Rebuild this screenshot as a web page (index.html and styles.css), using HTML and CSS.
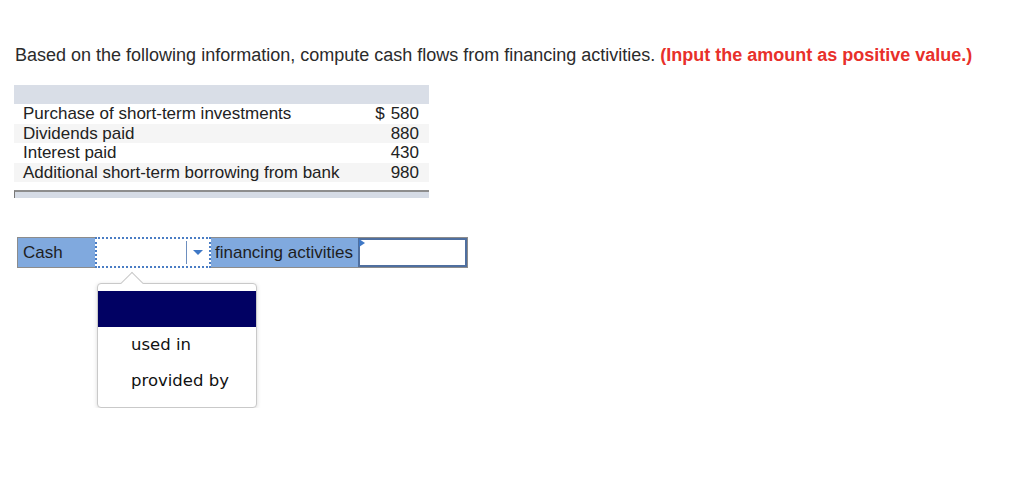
FILE: index.html
```html
<!DOCTYPE html>
<html>
<head>
<meta charset="utf-8">
<link rel="stylesheet" href="styles.css">
</head>
<body>
<div class="page">
  <p class="question">Based on the following information, compute cash flows from financing activities. <span class="note">(Input the amount as positive value.)</span></p>

  <div class="data">
    <div class="data-head"></div>
    <div class="data-row"><span>Purchase of short-term investments</span><span class="amt"><span class="cur">$</span>580</span></div>
    <div class="data-row alt"><span>Dividends paid</span><span class="amt">880</span></div>
    <div class="data-row"><span>Interest paid</span><span class="amt">430</span></div>
    <div class="data-row alt"><span>Additional short-term borrowing from bank</span><span class="amt">980</span></div>
  </div>
  <div class="data-foot"></div>

  <div class="answer-wrap">
    <div class="answer">
      <div class="cell label">Cash</div>
      <div class="cell select">
        <div class="select-box"></div>
        <div class="select-btn"><span class="caret"></span></div>
      </div>
      <div class="cell label wide">financing activities</div>
      <div class="cell input"><span class="flag"></span></div>
    </div>

    <div class="choices">
      <div class="notch"></div>
      <div class="opt selected"></div>
      <div class="opt">used in</div>
      <div class="opt">provided by</div>
    </div>
  </div>
</div>
</body>
</html>
```

FILE: styles.css
```css
html, body {
  margin: 0;
  padding: 0;
  background: #ffffff;
}

.page {
  padding: 0 0 0 14px;
  font-family: "Liberation Sans", Arial, sans-serif;
  color: #222;
}

.question {
  margin: 0;
  padding-top: 45px;
  padding-left: 1px;
  font-size: 18px;
  line-height: 21px;
  color: #2b2b2b;
}

.note {
  color: #e8302a;
  font-weight: bold;
}

.data {
  margin-top: 19px;
  width: 415px;
  font-size: 17px;
}

.data-head {
  height: 19px;
  background: #d9dee7;
}

.data-row {
  height: 19.5px;
  line-height: 19.5px;
  display: flex;
  justify-content: space-between;
  padding: 0 10px 0 9px;
  background: #ffffff;
  color: #222;
}

.data-row.alt {
  background: #f5f5f5;
}

.amt {
  text-align: right;
}

.cur {
  margin-right: 6px;
}

.data-foot {
  margin-top: 8px;
  width: 414px;
  height: 6px;
  background: #d5dbe5;
  border-top: 2px solid #8d8d8d;
  border-left: 1px solid #777;
}

.answer-wrap {
  margin-top: 39px;
  margin-left: 3px;
}

.answer {
  display: flex;
  width: 451px;
  height: 31px;
  box-sizing: border-box;
  border: 1px solid #8c8c8c;
  background: #80a9de;
  font-size: 17px;
}

.cell {
  height: 29px;
  box-sizing: border-box;
}

.cell.label {
  width: 77px;
  padding-left: 5px;
  line-height: 29px;
  color: #1e1e1e;
}

.cell.label.wide {
  width: 146px;
  padding-left: 4px;
}

.cell.select {
  width: 116px;
  margin-top: -1px;
  height: 31px;
  border: 2px dotted #4a7dc4;
  background: #ffffff;
  display: flex;
}

.select-box {
  flex: 1;
  border-right: 1px solid #6d8fbf;
  margin: 2px 0;
}

.select-btn {
  width: 22px;
  display: flex;
  align-items: center;
  justify-content: center;
}

.caret {
  width: 0;
  height: 0;
  border-left: 5px solid transparent;
  border-right: 5px solid transparent;
  border-top: 5px solid #3f78c6;
}

.cell.input {
  position: relative;
  flex: 1;
  margin-left: 1px;
  background: #ffffff;
  border: 2px solid #4f6f9f;
}

.flag {
  position: absolute;
  top: -1px;
  left: -1px;
  width: 0;
  height: 0;
  border-top: 4px solid transparent;
  border-bottom: 4px solid transparent;
  border-left: 6px solid #3f78c6;
}

.choices {
  position: relative;
  margin-top: 15px;
  margin-left: 80px;
  width: 160px;
  box-sizing: border-box;
  padding: 7px 0 8px;
  background: #ffffff;
  border: 1px solid #c9c9c9;
  border-radius: 4px;
  box-shadow: 0 1px 4px rgba(0, 0, 0, 0.15);
  font-family: "DejaVu Sans", Verdana, sans-serif;
  font-size: 16.5px;
  color: #111;
}

.notch {
  position: absolute;
  top: -9px;
  left: 26px;
  width: 15px;
  height: 15px;
  background: #ffffff;
  border-top: 1px solid #c9c9c9;
  border-left: 1px solid #c9c9c9;
  transform: rotate(45deg);
}

.opt {
  position: relative;
  height: 36px;
  line-height: 36px;
  padding-left: 33px;
}

.opt.selected {
  background: #010163;
}
```
